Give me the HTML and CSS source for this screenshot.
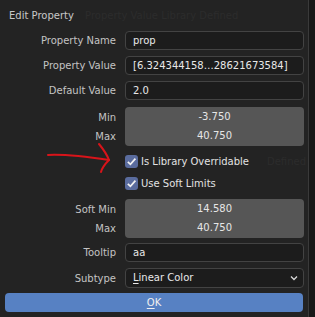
FILE: index.html
```html
<!DOCTYPE html>
<html lang="en">
<head>
  <meta charset="UTF-8" />
  <title>Edit Property</title>
  <link rel="stylesheet" href="styles.css">
</head>
<body>
  <div class="dialog">
    <div class="title">Edit Property <span class="ghost">Property Value   Library Defined</span></div>

    <div class="row r1">
      <label>Property Name</label>
      <div class="text">prop</div>
    </div>
    <div class="row r2">
      <label>Property Value</label>
      <div class="text">[6.324344158…28621673584]</div>
    </div>
    <div class="row r3">
      <label>Default Value</label>
      <div class="text">2.0</div>
    </div>

    <div class="group g1">
      <div class="row">
        <label>Min</label>
        <div class="num top">-3.750</div>
      </div>
      <div class="row">
        <label>Max</label>
        <div class="num bottom">40.750</div>
      </div>
    </div>

    <div class="checks">
      <div class="check"><span class="box"><svg viewBox="0 0 12 12"><path d="M2.6 6.3 L5 8.6 L9.6 3.4" /></svg></span>Is Library Overridable<span class="ghost ghost-r">Defined</span></div>
      <div class="check"><span class="box"><svg viewBox="0 0 12 12"><path d="M2.6 6.3 L5 8.6 L9.6 3.4" /></svg></span>Use Soft Limits</div>
    </div>

    <div class="group g2">
      <div class="row">
        <label>Soft Min</label>
        <div class="num top">14.580</div>
      </div>
      <div class="row">
        <label>Max</label>
        <div class="num bottom">40.750</div>
      </div>
    </div>

    <div class="row r4">
      <label>Tooltip</label>
      <div class="text">aa</div>
    </div>
    <div class="row r5">
      <label>Subtype</label>
      <div class="text select"><span><u>L</u>inear Color</span>
        <svg class="chev" viewBox="0 0 8 6"><path d="M1 1.5 L4 4.5 L7 1.5" /></svg>
      </div>
    </div>

    <div class="ok"><u>O</u>K</div>

    <svg class="arrow" viewBox="0 0 80 40">
      <path d="M4 15 C 25 14, 45 17, 65 20" />
      <path d="M55 4 C 60 10, 63 15, 65 20 C 61 24, 58 28, 57 32" />
    </svg>
  </div>
</body>
</html>
```

FILE: styles.css
```css
body {
  margin: 0;
  background: #181818;
  font-family: "DejaVu Sans", sans-serif;
  font-size: 10px;
  color: #d2d2d2;
}
.dialog {
  position: relative;
  width: 309px;
  height: 317px;
  background: #232323;
  border-right: 1px solid #3a3a3a;
  box-sizing: border-box;
  padding: 0 5px 0 5px;
}
.title {
  height: 31px;
  line-height: 32px;
  padding-left: 4px;
  color: #c8c8c8;
  white-space: nowrap;
}
.ghost {
  color: #2c2c2c;
  margin-left: 8px;
}
.ghost-r {
  margin-left: 18px;
}
.row {
  display: grid;
  grid-template-columns: 111px 179px;
  column-gap: 9px;
  height: 19px;
  align-items: center;
}
.row label {
  text-align: right;
  color: #c4c4c4;
}
.r2, .r3 { margin-top: 6px; }
.text {
  height: 19px;
  box-sizing: border-box;
  border: 1px solid #434343;
  border-radius: 4px;
  background: #1c1c1c;
  color: #e8e8e8;
  padding-left: 7px;
  line-height: 17px;
  white-space: nowrap;
  overflow: hidden;
}
.group { margin-top: 7px; }
.group .row:last-child { height: 20px; }
.num {
  height: 100%;
  box-sizing: border-box;
  background: #565656;
  color: #e6e6e6;
  text-align: center;
  line-height: 19px;
}
.num.top {
  border-radius: 4px 4px 0 0;
  border-bottom: 1px solid #3c3c3c;
}
.num.bottom {
  border-radius: 0 0 4px 4px;
}
.checks {
  margin-top: 4px;
  padding-left: 120px;
}
.check {
  display: flex;
  align-items: center;
  height: 22px;
  color: #e2e2e2;
  white-space: nowrap;
}
.box {
  width: 13px;
  height: 13px;
  border-radius: 3px;
  background: #5a6c9e;
  margin-right: 3px;
  display: flex;
}
.box svg {
  width: 13px;
  height: 13px;
  fill: none;
  stroke: #f2f2f2;
  stroke-width: 1.6;
}
.g2 { margin-top: 5px; }
.r4 { margin-top: 5px; }
.r5 { margin-top: 6px; height: 20px; }
.r5 .text { height: 20px; line-height: 18px; }
.select {
  display: flex;
  justify-content: space-between;
  align-items: center;
  padding-right: 5px;
}
.select u, .ok u { text-decoration-thickness: 1px; text-underline-offset: 2px; }
.chev {
  width: 8px;
  height: 6px;
  fill: none;
  stroke: #d8d8d8;
  stroke-width: 1.3;
}
.ok {
  margin-top: 5px;
  height: 19px;
  border-radius: 4px;
  background: #5781c3;
  color: #f0f0f0;
  text-align: center;
  line-height: 19px;
}
.arrow {
  position: absolute;
  left: 44px;
  top: 140px;
  width: 80px;
  height: 40px;
  fill: none;
  stroke: #d8141a;
  stroke-width: 2;
  stroke-linecap: round;
}
```
